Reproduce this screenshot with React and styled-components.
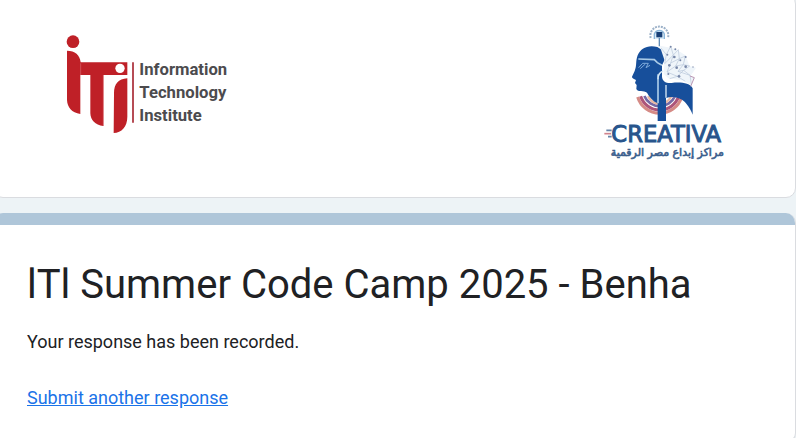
import React from "react";
import styled, { createGlobalStyle } from "styled-components";

const GlobalStyle = createGlobalStyle`
  *, *::before, *::after { box-sizing: border-box; }
  body {
    margin: 0;
    overflow: hidden;
    background: #edf3f6;
    color: #202124;
    font-family: Roboto, "Liberation Sans", sans-serif;
  }
`;

const Page = styled.main`
  display: flex;
  flex-direction: column;
  gap: 15px;
  margin: -6px 0 0 -7px;
`;

const Card = styled.section`
  overflow: hidden;
  background: #fff;
  border: 1px solid #dadce0;
  border-radius: 10px;
`;

const Banner = styled(Card)`
  display: flex;
  align-items: center;
  justify-content: space-between;
  padding: 20px 55px 27px 56px;
`;

const Logo = styled.svg`
  display: block;
  flex: none;
  width: ${(p) => p.$width}px;
  height: ${(p) => p.$height}px;
`;

const InstituteLogo = styled(Logo)`
  align-self: flex-start;
  margin-top: 5px;
`;

const InstituteName = styled.text`
  fill: #4c4b4e;
  font: 700 50px Roboto, sans-serif;
`;

const CreativaName = styled.text`
  fill: #28558c;
  font: 400 68px "DejaVu Sans", sans-serif;
  stroke: #28558c;
  stroke-width: 3px;
`;

const CreativaTagline = styled.text`
  fill: #3c5f8d;
  stroke: #3c5f8d;
  stroke-width: 2px;
  font: 400 33px "DejaVu Sans", sans-serif;
`;

const FormCard = styled(Card)`
  border-top: 0;
`;

const Stripe = styled.div`
  height: 12px;
  background: #afc6d9;
`;

const Content = styled.div`
  padding: 35px 33px 32px;
`;

const Title = styled.h1`
  margin: 0;
  font-size: 40px;
  font-weight: 400;
  line-height: 50px;
`;

const Message = styled.p`
  margin: 20px 0 32px;
  font-size: 18px;
  line-height: 24px;
`;

const Link = styled.a`
  display: inline-block;
  color: #1a73e8;
  font-size: 18px;
  line-height: 24px;
`;

function ItiLogo() {
  return (
    <InstituteLogo $width={190} $height={125} viewBox="0 0 570 375" role="img" aria-label="Information Technology Institute">
      <g fill="#bf2027">
        <circle cx="69" cy="65" r="19" />
        <path d="M51 92C75 92 90 105 92 127H232V165H160V318C135 316 122 300 121 280V165H91V282C65 278 52 262 51 240Z" />
        <path d="M192 220C192 192 205 177 232 175V290C232 320 215 338 191 339Z" />
      </g>
      <path d="M92 130V165M160 165V318" stroke="#d9646a" strokeWidth="2" />
      <circle cx="210" cy="145" r="14" fill="#fff" />
      <path d="M249 127V308" stroke="#b64c55" strokeWidth="6" />
      <InstituteName x="268" y="166">Information</InstituteName>
      <InstituteName x="268" y="234">Technology</InstituteName>
      <InstituteName x="268" y="302">Institute</InstituteName>
    </InstituteLogo>
  );
}

function CreativaLogo() {
  return (
    <Logo $width={150} $height={155} viewBox="0 0 450 465" role="img" aria-label="Creativa">
      <g fill="none">
        <path d="M143 246A69 69 0 0 0 275 246" stroke="#d58b86" strokeWidth="9" />
        <path d="M152 244A60 60 0 0 0 266 244" stroke="#ad5579" strokeWidth="9" />
        <path d="M163 243A50 50 0 0 0 255 243" stroke="#7569a5" strokeWidth="8" />
        <path d="M174 244A39 39 0 0 0 244 244" stroke="#e9b8a3" strokeWidth="7" />
      </g>
      <path d="M202 96C174 88 151 100 143 121C136 139 141 151 134 168L126 185C125 190 135 192 138 195L135 204L140 210L139 222C143 232 162 226 171 233C178 246 188 258 203 265V318H228V249C249 242 274 247 289 266C298 276 304 289 308 299V220C300 203 270 201 245 204C229 206 217 199 216 185V151L226 130L216 105Z" fill="#174f9b" />
      <path d="M204 178V265M216 151L202 143L193 134L145 132" fill="none" stroke="#aacbe7" strokeWidth="5" />
      <path d="M204 193C204 179 210 171 220 168M228 210V248" fill="none" stroke="#d7e8f5" strokeWidth="4" />
      <path d="M146 158L158 145H175L168 158L180 151M151 161L166 147" fill="none" stroke="#7faada" strokeWidth="3" />
      <path d="M209 92L230 96L254 101L287 121L298 153L318 158L302 182L312 190L302 211L283 197L235 190L221 176L224 137Z" fill="#eff5fa" />
      <g fill="none" stroke="#b7c6da" strokeWidth="2">
        <path d="M213 99L229 119L242 94L250 120L265 104L268 131L286 123L280 149L299 153L281 166L300 181L304 208" />
        <path d="M229 119L224 146L250 120L242 144L268 131L257 153L280 149L264 169L281 166L262 184L231 171L242 144M231 171L257 153M264 169L300 181M239 191L262 184L286 199" />
      </g>
      <g fill="#7787a8">
        <circle cx="232" cy="119" r="3" />
        <circle cx="242" cy="95" r="3" />
        <circle cx="256" cy="103" r="3" />
        <circle cx="253" cy="126" r="4" />
        <circle cx="271" cy="136" r="3" />
        <circle cx="287" cy="126" r="3" />
        <circle cx="238" cy="151" r="4" />
        <circle cx="260" cy="158" r="4" />
        <circle cx="287" cy="155" r="4" />
        <circle cx="235" cy="177" r="3" />
        <circle cx="267" cy="184" r="4" />
        <circle cx="309" cy="156" r="2" />
      </g>
      <path d="M300 183L313 188L302 214" fill="none" stroke="#b995b3" strokeWidth="3" />
      <path d="M182 69A27 27 0 1 1 234 69" fill="none" stroke="#9db2c9" strokeWidth="6" strokeDasharray="6 3" />
      <path d="M193 72V57A16 16 0 0 1 223 57V72" fill="#d9ebf8" stroke="#8cb7da" strokeWidth="4" />
      <rect x="199" y="51" width="18" height="16" fill="#183f76" />
      <path d="M208 69V94" stroke="#648eb8" strokeWidth="4" />
      <g fill="none" strokeWidth="5">
        <path d="M49 346H65M54 365H65" stroke="#6684a8" />
        <path d="M43 356H63" stroke="#d0848e" />
      </g>
      <CreativaName x="64" y="380">CREATIVA</CreativaName>
      <CreativaTagline x="232" y="424" textAnchor="middle" direction="rtl" lang="ar">
        مراكز إبداع مصر الرقمية
      </CreativaTagline>
    </Logo>
  );
}

export default function App() {
  return (
    <>
      <GlobalStyle />
      <Page>
        <Banner as="header">
          <ItiLogo />
          <CreativaLogo />
        </Banner>
        <FormCard>
          <Stripe />
          <Content>
            <Title>lTl Summer Code Camp 2025 - Benha</Title>
            <Message>Your response has been recorded.</Message>
            <Link href="#">Submit another response</Link>
          </Content>
        </FormCard>
      </Page>
    </>
  );
}
